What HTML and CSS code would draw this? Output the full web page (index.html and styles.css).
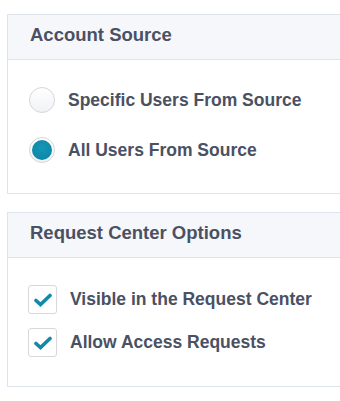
FILE: index.html
```html
<!DOCTYPE html>
<html>
  <head>
    <link rel="stylesheet" href="styles.css">
  </head>
  <body>
    <div class="panel">
      <div class="panel-header">Account Source</div>
      <div class="panel-body radios">
        <label class="option">
          <span class="radio"></span>
          Specific Users From Source
        </label>
        <label class="option">
          <span class="radio checked"></span>
          All Users From Source
        </label>
      </div>
    </div>

    <div class="panel">
      <div class="panel-header">Request Center Options</div>
      <div class="panel-body checks">
        <label class="option">
          <span class="checkbox">
            <svg width="18" height="14" viewBox="0 0 18 14">
              <path d="M2 7.5 L6.5 11.5 L16 2.5" fill="none" stroke="#1289a8" stroke-width="3.6" stroke-linecap="round" />
            </svg>
          </span>
          Visible in the Request Center
        </label>
        <label class="option">
          <span class="checkbox">
            <svg width="18" height="14" viewBox="0 0 18 14">
              <path d="M2 7.5 L6.5 11.5 L16 2.5" fill="none" stroke="#1289a8" stroke-width="3.6" stroke-linecap="round" />
            </svg>
          </span>
          Allow Access Requests
        </label>
      </div>
    </div>
  </body>
</html>
```

FILE: styles.css
```css
body {
  margin: 0;
  padding: 14px 0 0 7px;
  overflow: hidden;
  background-color: #ffffff;
  font-family: "Liberation Sans", Arial, sans-serif;
  color: #4a5163;
}

.panel {
  border: 1px solid #dfe3ec;
  margin-right: -20px;
  margin-bottom: 18px;
}

.panel-header {
  height: 45px;
  box-sizing: border-box;
  padding: 9px 0 0 22px;
  background-color: #f6f7fa;
  border-bottom: 1px solid #dfe3ec;
  font-size: 18.5px;
  font-weight: bold;
}

.panel-body {
  display: flex;
  flex-direction: column;
}

.radios {
  padding: 27px 0 30px 21px;
  gap: 24px;
}

.checks {
  padding: 27px 0 29px 20px;
  gap: 14px;
}

.option {
  display: flex;
  align-items: center;
  gap: 13px;
  font-size: 17.5px;
  font-weight: bold;
}

.radio {
  width: 24px;
  height: 24px;
  border-radius: 50%;
  border: 1.5px solid #d4d6da;
  background: linear-gradient(#ffffff, #f1f2f4);
  display: inline-flex;
  align-items: center;
  justify-content: center;
  flex-shrink: 0;
}

.radio.checked::after {
  content: "";
  width: 20px;
  height: 20px;
  border-radius: 50%;
  background: radial-gradient(circle at 50% 40%, #1596b6, #0b82a3);
}

.checkbox {
  width: 27px;
  height: 27px;
  border: 1.5px solid #d6d8dc;
  border-radius: 3px;
  background-color: #ffffff;
  display: inline-flex;
  align-items: center;
  justify-content: center;
  flex-shrink: 0;
}
```
